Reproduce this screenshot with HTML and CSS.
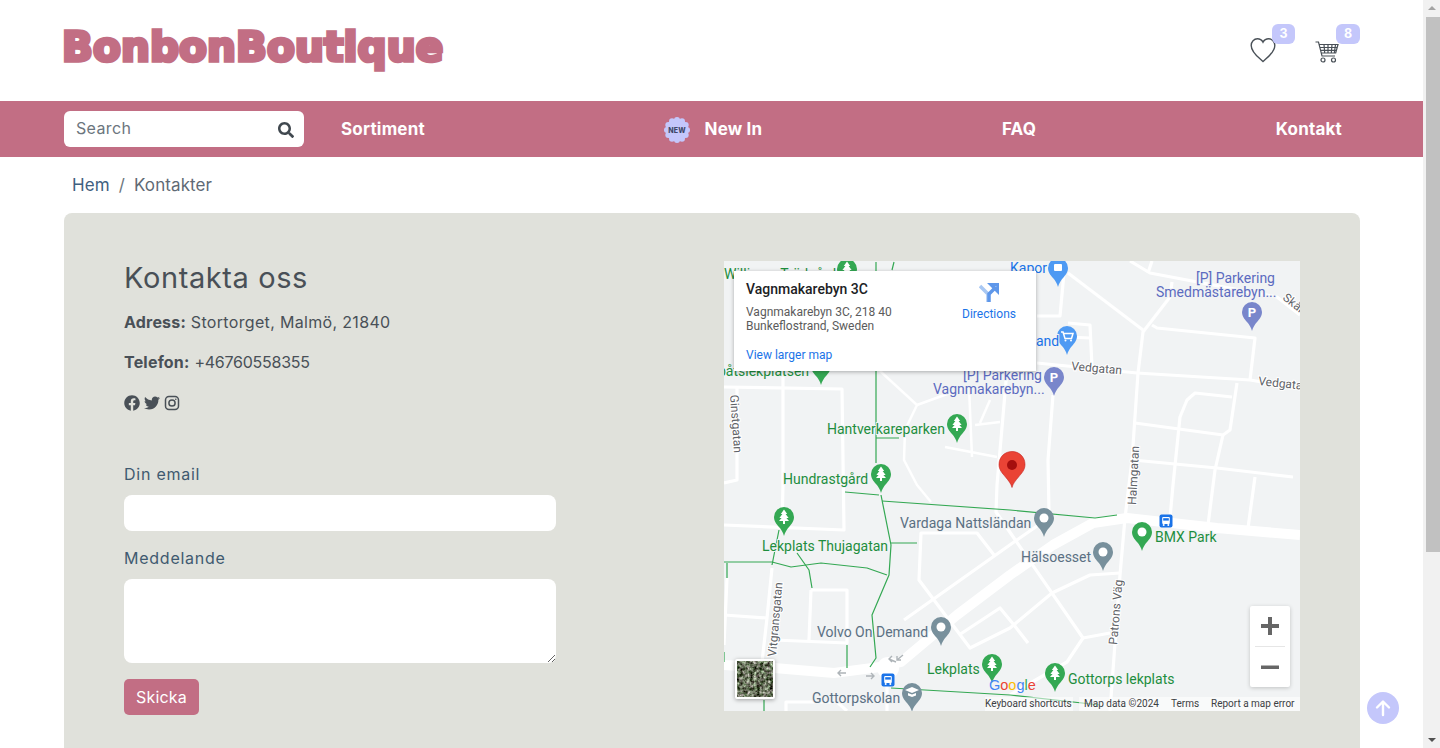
FILE: index.html
```html
<!DOCTYPE html>
<html lang="sv">
<head>
<meta charset="utf-8">
<title>BonbonBoutique</title>
<link rel="stylesheet" href="styles.css">
</head>
<body>
<svg class="defs" width="0" height="0" aria-hidden="true">
  <defs>
    <path id="pin" d="M0-10a10 10 0 0 1 10 10c0 4.5-2.5 7-5 10-2 2.4-4 5-5 9-1-4-3-6.6-5-9C-7.5 7-10 4.5-10 0A10 10 0 0 1 0-10z"/>
    <path id="tree" fill="#fff" d="M0-7.5l3.2 4.6H1.6l3 3.9H2.4L5 4H1v3h-2V4H-5l2.6-3H-4.600l3-3.900h-1.600z"/>
    <g id="bus"><rect x="-6.5" y="-6.5" width="13" height="13" rx="2" fill="#1a73e8"/><rect x="-3.8" y="-4" width="7.6" height="7" rx="1" fill="#fff"/><rect x="-2.8" y="-2.8" width="5.6" height="2.4" fill="#1a73e8"/><circle cx="-2.3" cy="4" r="1" fill="#fff"/><circle cx="2.3" cy="4" r="1" fill="#fff"/></g>
    <filter id="aerial" x="0" y="0" width="100%" height="100%" color-interpolation-filters="sRGB"><feTurbulence type="fractalNoise" baseFrequency="0.3" numOctaves="3" seed="7"/><feColorMatrix values="0 1.300 0 0 -.25  .25 1.300 0 0 -.34  0 1.300 0 0 -.3  0 0 0 0 1"/></filter>
  </defs>
</svg>
<div class="app">
  <div class="page">
    <header class="header">
      <a class="logo">BonbonBoutique</a>
      <div class="header-icons">
        <div class="icon-wrap heart-wrap">
          <svg class="heart" viewBox="0 0 26 26"><path d="M13 24.5C9 20.8 1.2 15.5 1.2 8.4 1.2 4.6 4 1.8 7.4 1.8c2.400 0 4.400 1.200 5.600 3.400 1.200-2.200 3.200-3.400 5.600-3.400 3.400 0 6.200 2.800 6.200 6.600 0 7.100-7.800 12.400-11.800 16.100z"/></svg>
          <span class="badge">3</span>
        </div>
        <div class="icon-wrap cart-wrap">
          <svg class="cart" viewBox="0 0 24 22"><path d="M0.500 1h3l3.500 14h13M3.800 3.500h19.200l-2.300 8.500H6.200M5 6.500h17.500M5.800 9.300h16M9 3.500l.7 8.500M13 3.500v8.500M17 3.500l-.7 8.500M20.500 3.500l-1.200 8.500"/><circle cx="8" cy="19" r="2"/><circle cx="18.500" cy="19" r="2"/></svg>
          <span class="badge">8</span>
        </div>
      </div>
    </header>

    <nav class="nav">
      <form class="search">
        <input class="search-input" type="text" placeholder="Search">
        <svg class="search-icon" viewBox="0 0 512 512"><path d="M505 442.700L405.300 343c-4.500-4.500-10.600-7-17-7H372c27.600-35.300 44-79.700 44-128C416 93.100 322.900 0 208 0S0 93.100 0 208s93.100 208 208 208c48.300 0 92.700-16.400 128-44v16.300c0 6.400 2.500 12.500 7 17l99.700 99.700c9.400 9.400 24.600 9.400 33.900 0l28.300-28.300c9.400-9.400 9.400-24.600.1-34zM208 336c-70.700 0-128-57.200-128-128 0-70.700 57.200-128 128-128 70.700 0 128 57.200 128 128 0 70.700-57.200 128-128 128z"/></svg>
      </form>
      <div class="nav-links">
        <a class="nav-link">Sortiment</a>
        <a class="nav-link nav-new">
          <svg class="new-badge" viewBox="0 0 26 26">
            <g class="new-shape"><circle cx="13" cy="13" r="11.200"/><circle cx="13" cy="3" r="3"/><circle cx="18" cy="4.300" r="3"/><circle cx="21.700" cy="8" r="3"/><circle cx="23" cy="13" r="3"/><circle cx="21.700" cy="18" r="3"/><circle cx="18" cy="21.700" r="3"/><circle cx="13" cy="23" r="3"/><circle cx="8" cy="21.700" r="3"/><circle cx="4.300" cy="18" r="3"/><circle cx="3" cy="13" r="3"/><circle cx="4.300" cy="8" r="3"/><circle cx="8" cy="4.300" r="3"/></g>
            <text class="new-text" x="13" y="15.500">NEW</text>
          </svg>
          New In
        </a>
        <a class="nav-link">FAQ</a>
        <a class="nav-link">Kontakt</a>
      </div>
    </nav>

    <div class="crumbs"><a class="crumb-link">Hem</a><span class="crumb-sep">/</span><span class="crumb-now">Kontakter</span></div>

    <main class="panel">
      <section class="contact">
        <h1 class="title">Kontakta oss</h1>
        <p class="line"><strong class="label-strong">Adress:</strong> Stortorget, Malmö, 21840</p>
        <p class="line"><strong class="label-strong">Telefon:</strong> <span class="phone">+46760558355</span></p>
        <div class="social">
          <svg class="soc" viewBox="0 0 512 512"><path d="M504 256C504 119 393 8 256 8S8 119 8 256c0 123.780 90.690 226.380 209.250 245V327.690h-63V256h63v-54.640c0-62.150 37-96.480 93.670-96.480 27.140 0 55.520 4.840 55.520 4.840v61h-31.280c-30.800 0-40.410 19.120-40.410 38.730V256h68.780l-11 71.690h-57.780V501C413.310 482.380 504 379.780 504 256z"/></svg>
          <svg class="soc" viewBox="0 0 512 512"><path d="M459.370 151.716c.325 4.548.325 9.097.325 13.645 0 138.720-105.583 298.558-298.558 298.558-59.452 0-114.680-17.219-161.137-47.106 8.447.974 16.568 1.299 25.340 1.299 49.055 0 94.213-16.568 130.274-44.832-46.132-.975-84.792-31.188-98.112-72.772 6.498.974 12.995 1.624 19.818 1.624 9.421 0 18.843-1.300 27.614-3.573-48.081-9.747-84.143-51.980-84.143-102.985v-1.299c13.969 7.797 30.214 12.670 47.431 13.319-28.264-18.843-46.781-51.005-46.781-87.391 0-19.492 5.197-37.360 14.294-52.954 51.655 63.675 129.300 105.258 216.365 109.807-1.624-7.797-2.599-15.918-2.599-24.040 0-57.828 46.782-104.934 104.934-104.934 30.213 0 57.502 12.670 76.670 33.137 23.715-4.548 46.456-13.320 66.599-25.340-7.798 24.366-24.366 44.833-46.132 57.827 21.117-2.273 41.584-8.122 60.426-16.243-14.292 20.791-32.161 39.308-52.628 54.253z"/></svg>
          <svg class="soc soc-insta" viewBox="0 0 16 16"><rect x="1.500" y="1.500" width="13" height="13" rx="3.500"/><circle cx="8" cy="8" r="3.100"/><circle class="insta-dot" cx="11.800" cy="4.200" r=".8"/></svg>
        </div>
        <form class="form">
          <label class="field-label" for="email">Din email</label>
          <input class="field" id="email" type="email">
          <label class="field-label" for="msg">Meddelande</label>
          <textarea class="field field-area" id="msg"></textarea>
          <button class="submit" type="button">Skicka</button>
        </form>
      </section>

      <section class="map">
        <svg class="map-svg" viewBox="724 261 576 450">
          <rect x="724" y="261" width="576" height="450" fill="#f1f3f4"/>
          <g class="r-mid">
            <path d="M724 387L842 389L844 530L724 525"/>
            <path d="M783 373V485L782 527"/>
            <path d="M737 388V480L724 483"/>
            <path d="M1037 363L1137 373L1250 380L1300 388"/>
            <path d="M1068 273L1143 330"/>
            <path d="M1065 262L1060 316L1037 316"/>
            <path d="M1130 261L1150 273L1277 297L1300 315"/>
            <path d="M1152 261L1148 273"/>
            <path d="M1172 282L1170 297L1143 332L1138 373L1132 460L1125 518L1120 575L1110 711"/>
            <path d="M1152 325L1157 328L1255 338L1250 380"/>
            <path d="M1237 383L1230 430L1223 435L1135 423"/>
            <path d="M1232 397L1195 393L1187 400L1180 417L1173 485L1170 518"/>
            <path d="M1223 435L1215 470L1208 525"/>
            <path d="M1133 460L1217 468L1293 477"/>
            <path d="M1255 477L1248 528"/>
            <path d="M1068 323L1090 325L1092 367M1067 337L1090 338"/>
            <path d="M1053 395L1048 460L1049 512"/>
            <path d="M1007 370L997 485L996 512L1083 638L1110 633"/>
            <path d="M904 620L1014 542L1040 524"/>
            <path d="M1083 638L1067 662L1027 685L1010 695"/>
            <path d="M1052 593L1010 628L970 648L919 580L921 533L977 533L994 555"/>
            <path d="M1052 593L1090 575L1120 573"/>
            <path d="M959 635L1000 608L1014 625L1028 643"/>
            <path d="M811 590H847V643L774 640M811 590L809 640"/>
            <path d="M772 568L767 618L762 662"/>
            <path d="M724 615L767 618M727 578L724 645"/>
            <path d="M786 711V702H837L847 711"/>
            <path d="M887 677V711"/>
          </g>
          <g class="r-thin">
            <path d="M880 371L917 405L905 430L904 460L917 485L931 502"/>
            <path d="M917 405L950 393L969 387"/>
            <path d="M945 447L997 457M972 457L969 387M1000 422L975 425M990 400L980 423"/>
          </g>
          <path class="r-big" d="M1300 535L1217 528L1127 518L1093 523L1053 545L1010 575L957 615L901 662L880 667L834 673L774 668L724 665"/>
          <circle cx="888" cy="668" r="11" fill="#fff"/>
          <g class="g-line">
            <path d="M876 262V463M876 438H899M894 262L892 270"/>
            <path d="M845 492L879 495M881 495L891 545L889 575L872 615L876 658L870 667"/>
            <path d="M882 501L1010 510L1095 518L1117 515"/>
            <path d="M891 543H917M779 530L772 565"/>
            <path d="M724 562H772L791 567L821 563L867 568L887 575"/>
            <path d="M797 553L809 570L812 588M727 563V578M847 645V668M724 652V662M764 700V711"/>
            <path d="M891 688L1010 695L1100 705"/>
          </g>

          <g class="pin-green">
            <use href="#pin" x="847" y="269"/><use href="#pin" x="821" y="366"/><use href="#pin" x="957" y="424"/><use href="#pin" x="881" y="474"/><use href="#pin" x="784" y="517"/><use href="#pin" x="992" y="664"/><use href="#pin" x="1055" y="673"/><use href="#pin" x="1142" y="532"/>
          </g>
          <use href="#tree" x="847" y="269"/><use href="#tree" x="957" y="424"/><use href="#tree" x="881" y="474"/><use href="#tree" x="784" y="517"/><use href="#tree" x="992" y="664"/><use href="#tree" x="1055" y="673"/>
          <circle cx="1142" cy="532" r="4.500" fill="#fff"/>

          <g class="pin-grey">
            <use href="#pin" x="1044" y="518"/><use href="#pin" x="1103" y="552"/><use href="#pin" x="941" y="627"/><use href="#pin" x="912" y="693"/>
          </g>
          <circle cx="1044" cy="518" r="4.500" fill="#fff"/><circle cx="1103" cy="552" r="4.500" fill="#fff"/><circle cx="941" cy="627" r="4.500" fill="#fff"/>
          <path fill="#fff" d="M912 687l7 3-7 3-7-3zM908 693v2.500l4 1.500 4-1.500V693l-4 1.600z"/>

          <g class="pin-park">
            <use href="#pin" x="1252" y="312"/><use href="#pin" x="1054" y="377"/>
          </g>
          <text class="p-text" x="1252" y="317">P</text><text class="p-text" x="1054" y="382">P</text>

          <g class="pin-shop">
            <use href="#pin" x="1067" y="336"/><use href="#pin" x="1058" y="268"/>
          </g>
          <path class="cart-mini" d="M1061 332h2l2 6.500h6.500l1.500-5h-9.500"/><circle cx="1065.500" cy="340.500" r="1" fill="#fff"/><circle cx="1071" cy="340.500" r="1" fill="#fff"/>
          <rect x="1054" y="264" width="8" height="7" rx="1" fill="#fff"/>

          <use href="#bus" x="888" y="680"/><use href="#bus" x="1166" y="521"/>

          <g class="arrows">
            <path d="M846 673H838M841 670L838 673L841 676"/><path d="M866 676H874M871 673L874 676L871 679"/>
            <path d="M896 662L889 659M892 656L889 659L892 662"/><path d="M903 655L897 660M901 660H897V656"/>
          </g>

          <path fill="#ea4335" stroke="#c5221f" stroke-width=".6" d="M1012 451.500c7 0 13 5.300 13 13 0 5.500-3.300 8.600-6.500 12.500-3 3.700-5.500 6.500-6.500 10.500-1-4-3.500-6.800-6.500-10.500-3.200-3.900-6.500-7-6.500-12.500 0-7.700 6-13 13-13z"/>
          <circle cx="1012" cy="465" r="5" fill="#a50e0e"/>

          <g class="lbl lbl-green">
            <text x="724" y="279">Williams Trädgård</text>
            <text x="718" y="376">båtsiekplatsen</text>
            <text x="827" y="434">Hantverkareparken</text>
            <text x="783" y="484">Hundrastgård</text>
            <text x="762" y="551">Lekplats Thujagatan</text>
            <text x="927" y="674">Lekplats</text>
            <text x="1068" y="684">Gottorps lekplats</text>
            <text x="1155" y="542">BMX Park</text>
          </g>
          <g class="lbl lbl-grey">
            <text x="900" y="528">Vardaga Nattsländan</text>
            <text x="1021" y="562">Hälsoesset</text>
            <text x="817" y="637">Volvo On Demand</text>
            <text x="812" y="703">Gottorpskolan</text>
          </g>
          <g class="lbl lbl-park">
            <text x="1196" y="283">[P] Parkering</text>
            <text x="1156" y="297">Smedmästarebyn...</text>
            <text x="963" y="380">[P] Parkering</text>
            <text x="933" y="394">Vagnmakarebyn...</text>
          </g>
          <g class="lbl lbl-shop">
            <text x="1010" y="273">Kapor</text>
            <text x="1036" y="346">and</text>
          </g>
          <g class="road-lbl">
            <text transform="translate(1071 370) rotate(5)">Vedgatan</text>
            <text transform="translate(1258 385) rotate(6)">Vedgatan</text>
            <text transform="translate(1282 299) rotate(38)">Skåne</text>
            <text transform="translate(730 395) rotate(86)">Ginstgatan</text>
            <text transform="translate(776 657) rotate(-85)">Vitgransgatan</text>
            <text transform="translate(1136 505) rotate(-87)">Halmgatan</text>
            <text transform="translate(1117 645) rotate(-85)">Patrons Väg</text>
          </g>
          <text class="google" x="989" y="690"><tspan fill="#4285f4">G</tspan><tspan fill="#ea4335">o</tspan><tspan fill="#fbbc04">o</tspan><tspan fill="#4285f4">g</tspan><tspan fill="#34a853">l</tspan><tspan fill="#ea4335">e</tspan></text>
          <rect x="985" y="697" width="88" height="14" fill="#fff" opacity=".55"/>
          <rect x="1079" y="697" width="221" height="14" fill="#fff" opacity=".55"/>
          <g class="attr">
            <text x="985" y="707">Keyboard shortcuts</text>
            <text x="1084" y="707">Map data ©2024</text>
            <text x="1171" y="707">Terms</text>
            <text x="1211" y="707">Report a map error</text>
          </g>
        </svg>

        <div class="card">
          <div class="card-main">
            <div class="card-title">Vagnmakarebyn 3C</div>
            <div class="card-addr">Vagnmakarebyn 3C, 218 40<br>Bunkeflostrand, Sweden</div>
            <a class="card-link">View larger map</a>
          </div>
          <div class="card-dir">
            <svg class="dir-icon" viewBox="0 0 20 20"><path class="dir-light" d="M1 3l8 8v8"/><path class="dir-dark" d="M10 19v-8l6-6M12 1.500h7v7z"/></svg>
            <a class="dir-text">Directions</a>
          </div>
        </div>

        <div class="layer">
          <svg class="layer-img" viewBox="0 0 36 36"><rect width="36" height="36" filter="url(#aerial)"/></svg>
        </div>

        <div class="zoom">
          <button class="zoom-btn" type="button"><svg class="zoom-ic" viewBox="0 0 18 18"><path d="M0 7h7V0h4v7h7v4h-7v7H7v-7H0z"/></svg></button>
          <span class="zoom-div"></span>
          <button class="zoom-btn" type="button"><svg class="zoom-ic" viewBox="0 0 18 18"><path d="M0 7.500h18v3.500H0z"/></svg></button>
        </div>
      </section>
    </main>
  </div>

  <div class="scrollbar" aria-hidden="true">
    <span class="sb-up"></span>
    <span class="sb-thumb"></span>
    <span class="sb-down"></span>
  </div>
</div>
<a class="to-top"><svg class="to-top-ic" viewBox="0 0 18 18"><path d="M9 16V3M3 8.500L9 2.500l6 6"/></svg></a>
</body>
</html>
```

FILE: styles.css
```css
* { box-sizing: border-box; }
html, body { margin: 0; height: 100%; overflow: hidden; }
body { font-family: Inter, "Liberation Sans", sans-serif; color: #495057; background: #fff; font-size: 16px; }
.defs { display: block; width: 0; height: 0; }
.app { display: flex; height: 748px; }
.page { flex: 1; min-width: 0; height: 748px; overflow: hidden; }

.header { height: 101px; padding: 0 83px 0 62px; display: flex; justify-content: space-between; align-items: center; }
.logo { font-family: "DejaVu Sans", sans-serif; font-weight: 700; font-size: 40.5px; line-height: 48px; color: #c26e84; -webkit-text-stroke: 3.6px #c26e84; letter-spacing: .15px; margin-top: -8px; white-space: nowrap; }
.header-icons { display: flex; align-items: flex-start; gap: 40px; margin-top: 3px; }
.icon-wrap { position: relative; display: block; width: 25px; height: 26px; }
.heart { display: block; width: 26px; height: 26px; fill: none; stroke: #495057; stroke-width: 1.400; }
.cart-wrap { margin-top: 4px; }
.cart { display: block; width: 24px; height: 22px; fill: none; stroke: #495057; stroke-width: 1.200; }
.badge { position: absolute; left: 22px; top: -13px; width: 23px; height: 20px; border-radius: 6px; background: #c4c7fb; color: #fff; font-size: 12.500px; font-weight: 700; line-height: 20px; text-align: center; }
.cart-wrap .badge { left: 21px; top: -17px; width: 24px; }

.nav { height: 56px; background: #c26e84; padding: 10px 81px 10px 64px; display: flex; align-items: center; }
.search { position: relative; width: 240px; height: 36px; flex: none; }
.search-input { width: 100%; height: 36px; border: 0; border-radius: 6px; background: #fff; padding: 0 36px 2px 12px; font: 400 16px/34px Inter, sans-serif; letter-spacing: .35px; color: #495057; outline: 0; }
.search-input::placeholder { color: #6c757d; opacity: 1; }
.search-icon { position: absolute; right: 10px; top: 11px; width: 16px; height: 16px; fill: #40484f; }
.nav-links { flex: 1; margin-left: 37px; display: flex; justify-content: space-between; align-items: center; }
.nav-link { color: #fff; font-weight: 700; font-size: 17px; letter-spacing: .2px; line-height: 20px; white-space: nowrap; }
.nav-new { display: flex; align-items: center; gap: 14px; }
.new-badge { display: block; width: 26px; height: 26px; margin-top: 2px; }
.new-shape { fill: #c4c7fb; }
.new-text { font: 800 7px Inter, sans-serif; fill: #40486a; text-anchor: middle; }

.crumbs { height: 56px; margin: 0 64px; padding: 18px 8px 0; font-size: 17px; line-height: 20px; letter-spacing: .1px; display: flex; }
.crumb-link { color: #3f6080; }
.crumb-sep { margin: 0 9px; color: #6c757d; }
.crumb-now { color: #5f6a75; }

.panel { margin: 0 63px 0 64px; height: 800px; background: #e0e1db; border-radius: 8px; padding: 48px 60px; display: grid; grid-template-columns: 576px 576px; column-gap: 24px; align-items: start; }
.contact { min-width: 0; }
.title { margin: 0; font-size: 29px; line-height: 34px; font-weight: 400; color: #495057; letter-spacing: .6px; padding-bottom: 17px; }
.line { margin: 0 0 19px; font-size: 16px; line-height: 21px; letter-spacing: .33px; }
.label-strong { font-weight: 700; letter-spacing: .2px; }
.phone { letter-spacing: -.25px; }
.social { display: flex; gap: 4px; height: 19px; align-items: flex-end; }
.soc { display: block; width: 16px; height: 16px; fill: #495057; }
.soc-insta { fill: none; stroke: #495057; stroke-width: 1.500; }
.insta-dot { fill: #495057; stroke: none; }
.form { padding-top: 53px; width: 432px; display: flex; flex-direction: column; }
.field-label { font-size: 16px; line-height: 20px; letter-spacing: .75px; color: #3f5a70; margin-bottom: 11px; }
.field { width: 100%; height: 36px; border: 0; border-radius: 8px; background: #fff; margin-bottom: 17px; outline: 0; padding: 6px 12px; }
.field-area { height: 84px; margin-bottom: 16px; display: block; }
.submit { width: 75px; height: 36px; border: 0; border-radius: 5px; background: #c26e84; color: #fff; font: 400 16px Inter, sans-serif; letter-spacing: .2px; padding: 0; }

.map { position: relative; width: 576px; height: 450px; overflow: hidden; }
.map-svg { display: block; width: 576px; height: 450px; }
.r-mid, .r-thin, .r-big, .g-line, .arrows, .cart-mini { fill: none; }
.r-mid { stroke: #fff; stroke-width: 3.200; stroke-linejoin: round; }
.r-thin { stroke: #fff; stroke-width: 2.500; stroke-linejoin: round; }
.r-big { stroke: #fff; stroke-width: 10; stroke-linejoin: round; }
.g-line { stroke: #34a853; stroke-width: 1.200; stroke-linejoin: round; }
.arrows { stroke: #aeb4b8; stroke-width: 1.400; }
.cart-mini { stroke: #fff; stroke-width: 1.500; }
.pin-green { fill: #34a853; }
.pin-grey { fill: #78909c; }
.pin-park { fill: #7986cb; }
.pin-shop { fill: #4e9af3; }
.p-text { font: 700 13px Roboto, sans-serif; fill: #fff; text-anchor: middle; }
.lbl { font: 400 14px Roboto, sans-serif; paint-order: stroke; stroke: #f1f3f4; stroke-width: 2px; stroke-linejoin: round; }
.lbl-green { fill: #1e8e3e; }
.lbl-grey { fill: #5b7083; }
.lbl-park { fill: #5c6bc0; }
.lbl-shop { fill: #1a73e8; }
.road-lbl { font: 400 12px Roboto, sans-serif; fill: #5f6368; paint-order: stroke; stroke: #fff; stroke-width: 2px; }
.google { font: 400 14.500px "Liberation Sans", sans-serif; stroke-width: .4px; }
.attr { font: 400 10px Roboto, sans-serif; fill: #3c4043; }

.card { position: absolute; left: 10px; top: 10px; width: 302px; height: 100px; background: #fff; box-shadow: 0 1px 4px rgba(0,0,0,.3); padding: 10px 12px; display: flex; justify-content: space-between; font-family: Roboto, sans-serif; }
.card-title { font-size: 14px; font-weight: 500; line-height: 17px; color: #202124; }
.card-addr { margin-top: 7px; font-size: 12px; line-height: 14px; color: #5b5b5b; }
.card-link { display: block; margin-top: 15px; font-size: 12px; line-height: 14px; color: #1a73e8; }
.card-dir { width: 62px; margin-right: 4px; display: flex; flex-direction: column; align-items: center; }
.dir-icon { display: block; width: 20px; height: 20px; margin-top: 2px; fill: none; }
.dir-light { stroke: #a9c8f3; stroke-width: 3.500; }
.dir-dark { stroke: #5e97ea; stroke-width: 3.500; }
.dir-text { font-size: 12px; line-height: 14px; margin-top: 4px; color: #1a73e8; }

.layer { position: absolute; left: 11px; top: 398px; width: 40px; height: 40px; border: 2px solid #fff; border-radius: 2px; box-shadow: 0 1px 4px rgba(0,0,0,.35); overflow: hidden; background: #66705a; }
.layer-img { display: block; width: 36px; height: 36px; }

.zoom { position: absolute; left: 526px; top: 345px; width: 40px; height: 81px; background: #fff; border-radius: 2px; box-shadow: 0 1px 4px rgba(0,0,0,.2); display: flex; flex-direction: column; align-items: center; }
.zoom-btn { width: 40px; height: 40px; border: 0; background: none; padding: 0; display: flex; align-items: center; justify-content: center; }
.zoom-ic { display: block; width: 18px; height: 18px; fill: #666; }
.zoom-div { width: 30px; height: 1px; background: #e6e6e6; flex: none; }

.scrollbar { width: 17px; flex: none; height: 748px; background: #f1f1f1; display: flex; flex-direction: column; align-items: center; justify-content: space-between; }
.sb-up, .sb-down { width: 0; height: 0; border-left: 4px solid transparent; border-right: 4px solid transparent; flex: none; }
.sb-up { border-bottom: 4px solid #a3a3a3; margin-top: 6px; }
.sb-down { border-top: 4px solid #505050; margin-bottom: 6px; }
.sb-thumb { width: 14px; height: 535px; background: #c1c1c1; margin: 7px 0 auto 2px; flex: none; }

.to-top { position: fixed; left: 1367px; top: 692px; width: 32px; height: 32px; border-radius: 50%; background: #c4c7fb; display: flex; align-items: center; justify-content: center; }
.to-top-ic { display: block; width: 18px; height: 18px; fill: none; stroke: #fff; stroke-width: 2.400; stroke-linecap: round; stroke-linejoin: round; }
```
